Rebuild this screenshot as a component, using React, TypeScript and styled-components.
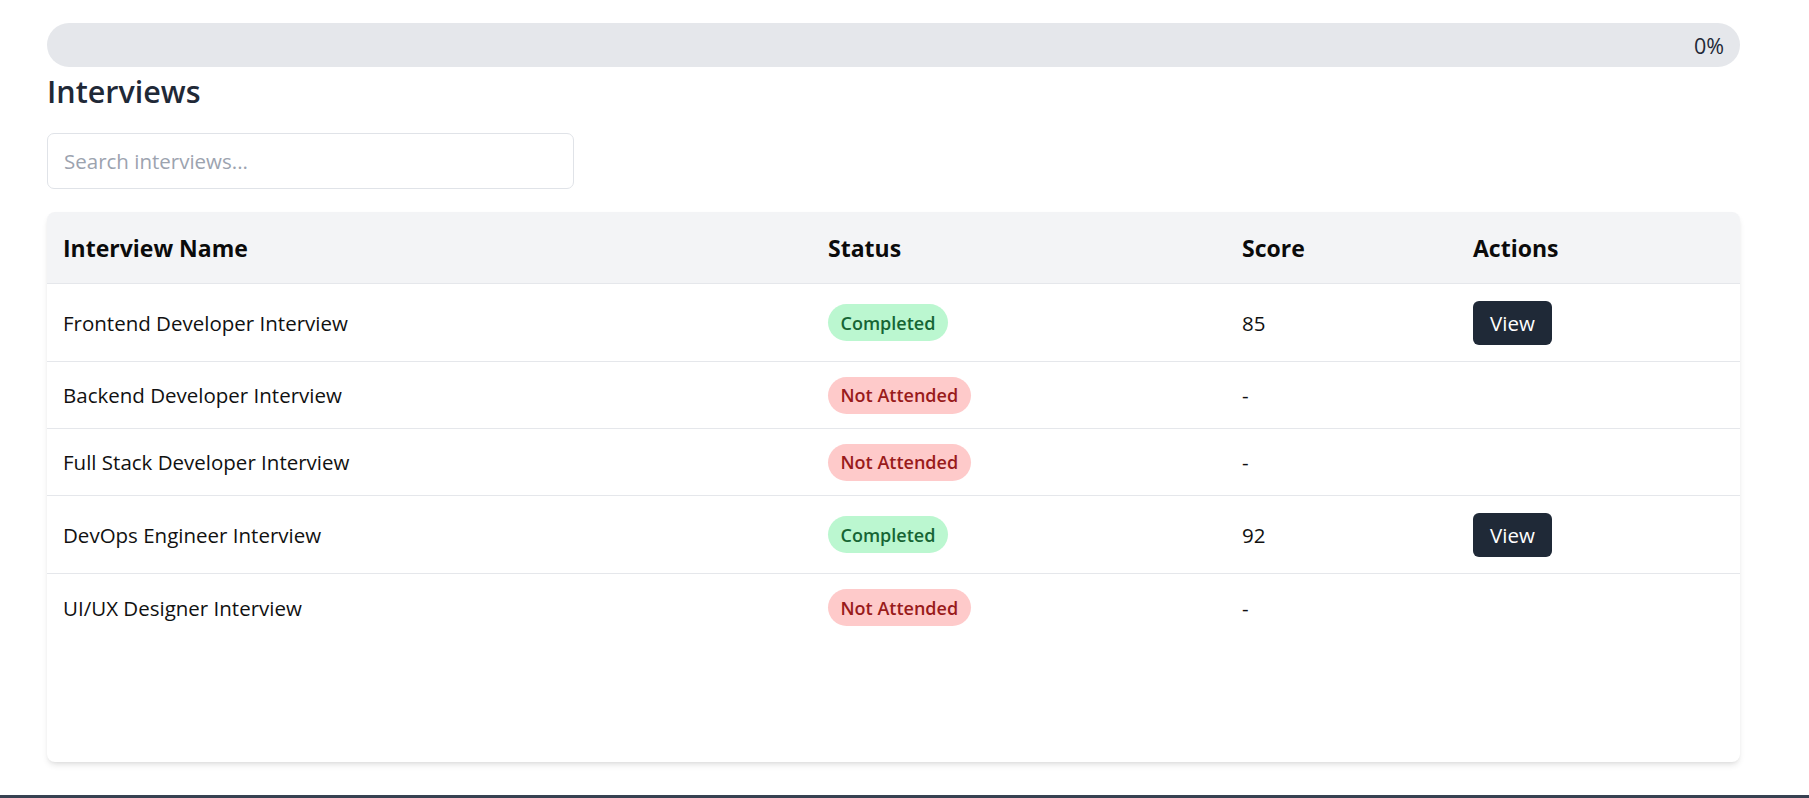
import React from "react";
import styled, { createGlobalStyle } from "styled-components";

const GlobalStyle = createGlobalStyle`
  *, *::before, *::after { box-sizing: border-box; }
  html, body { margin: 0; padding: 0; background: #ffffff; }
  body {
    font-family: "Open Sans", "Noto Sans", "Liberation Sans", sans-serif;
    color: #111111;
    -webkit-font-smoothing: antialiased;
  }
`;

const Page = styled.div`
  display: flex;
  flex-direction: column;
  height: 100vh;
  min-height: 798px;
`;

const Main = styled.main`
  padding: 23px 69px 0 47px;
  display: flex;
  flex-direction: column;
`;

const Progress = styled.div`
  position: relative;
  height: 44px;
  border-radius: 22px;
  background: #e5e7eb;
  display: flex;
  align-items: center;
  justify-content: flex-end;
  padding: 0 16px;
  overflow: hidden;
`;

const ProgressFill = styled.div`
  position: absolute;
  left: 0;
  top: 0;
  bottom: 0;
  background: #3b82f6;
  border-radius: 22px;
`;

const ProgressLabel = styled.span`
  position: relative;
  font-size: 21.5px;
  color: #1f2937;
`;

const Title = styled.h2`
  margin: 6px 0 0;
  font-size: 30.5px;
  line-height: 36px;
  font-weight: 600;
  color: #1f2937;
`;

const Search = styled.input`
  margin-top: 24px;
  width: 527px;
  height: 56px;
  padding: 0 16px;
  border: 1px solid #e0e3e8;
  border-radius: 7px;
  font-family: inherit;
  font-size: 20.5px;
  color: #111827;
  outline: none;
  &::placeholder { color: #9ca3af; }
`;

const Card = styled.div`
  margin-top: 23px;
  height: 550px;
  border-radius: 8px;
  background: #ffffff;
  overflow: hidden;
  box-shadow: 0 4px 6px -1px rgba(0, 0, 0, 0.1), 0 2px 4px -2px rgba(0, 0, 0, 0.08);
`;

const Row = styled.div<{ $head?: boolean; $tall?: boolean; $last?: boolean }>`
  display: grid;
  grid-template-columns: 765px 414px 231px 1fr;
  align-items: center;
  height: ${(p) => (p.$head ? 72 : p.$tall ? 78 : 67)}px;
  background: ${(p) => (p.$head ? "#f3f4f6" : "#ffffff")};
  border-bottom: ${(p) => (p.$last ? "none" : "1px solid #e5e7eb")};
`;

const HeadCell = styled.div`
  padding: 0 16px;
  font-size: 23px;
  font-weight: 700;
  color: #0b0b0b;
`;

const Cell = styled.div`
  padding: 0 16px;
  font-size: 20.5px;
  color: #111111;
  display: flex;
  align-items: center;
`;

const Pill = styled.span<{ $ok: boolean }>`
  display: inline-flex;
  align-items: center;
  height: 37px;
  padding: 0 12.5px;
  border-radius: 999px;
  font-size: 18px;
  font-weight: 600;
  background: ${(p) => (p.$ok ? "#bbf7d0" : "#fecaca")};
  color: ${(p) => (p.$ok ? "#166534" : "#991b1b")};
`;

const ViewButton = styled.button`
  height: 44px;
  padding: 0 17px;
  border: none;
  border-radius: 6px;
  background: #1f2937;
  color: #ffffff;
  font-family: inherit;
  font-size: 20.5px;
  cursor: pointer;
`;

const Spacer = styled.div`
  flex: 1;
`;

const BottomBar = styled.div`
  height: 3px;
  background: #374151;
`;

type Interview = { name: string; completed: boolean; score: number | null };

const interviews: Interview[] = [
  { name: "Frontend Developer Interview", completed: true, score: 85 },
  { name: "Backend Developer Interview", completed: false, score: null },
  { name: "Full Stack Developer Interview", completed: false, score: null },
  { name: "DevOps Engineer Interview", completed: true, score: 92 },
  { name: "UI/UX Designer Interview", completed: false, score: null },
];

export default function App() {
  const progress = 0;
  return (
    <>
      <GlobalStyle />
      <Page>
        <Main>
          <Progress>
            <ProgressFill style={{ width: `${progress}%` }} />
            <ProgressLabel>{progress}%</ProgressLabel>
          </Progress>
          <Title>Interviews</Title>
          <Search placeholder="Search interviews..." />
          <Card>
            <Row $head>
              <HeadCell>Interview Name</HeadCell>
              <HeadCell>Status</HeadCell>
              <HeadCell>Score</HeadCell>
              <HeadCell>Actions</HeadCell>
            </Row>
            {interviews.map((it, i) => (
              <Row key={it.name} $tall={it.completed} $last={i === interviews.length - 1}>
                <Cell>{it.name}</Cell>
                <Cell>
                  <Pill $ok={it.completed}>{it.completed ? "Completed" : "Not Attended"}</Pill>
                </Cell>
                <Cell>{it.score ?? "-"}</Cell>
                <Cell>{it.completed && <ViewButton>View</ViewButton>}</Cell>
              </Row>
            ))}
          </Card>
        </Main>
        <Spacer />
        <BottomBar />
      </Page>
    </>
  );
}
